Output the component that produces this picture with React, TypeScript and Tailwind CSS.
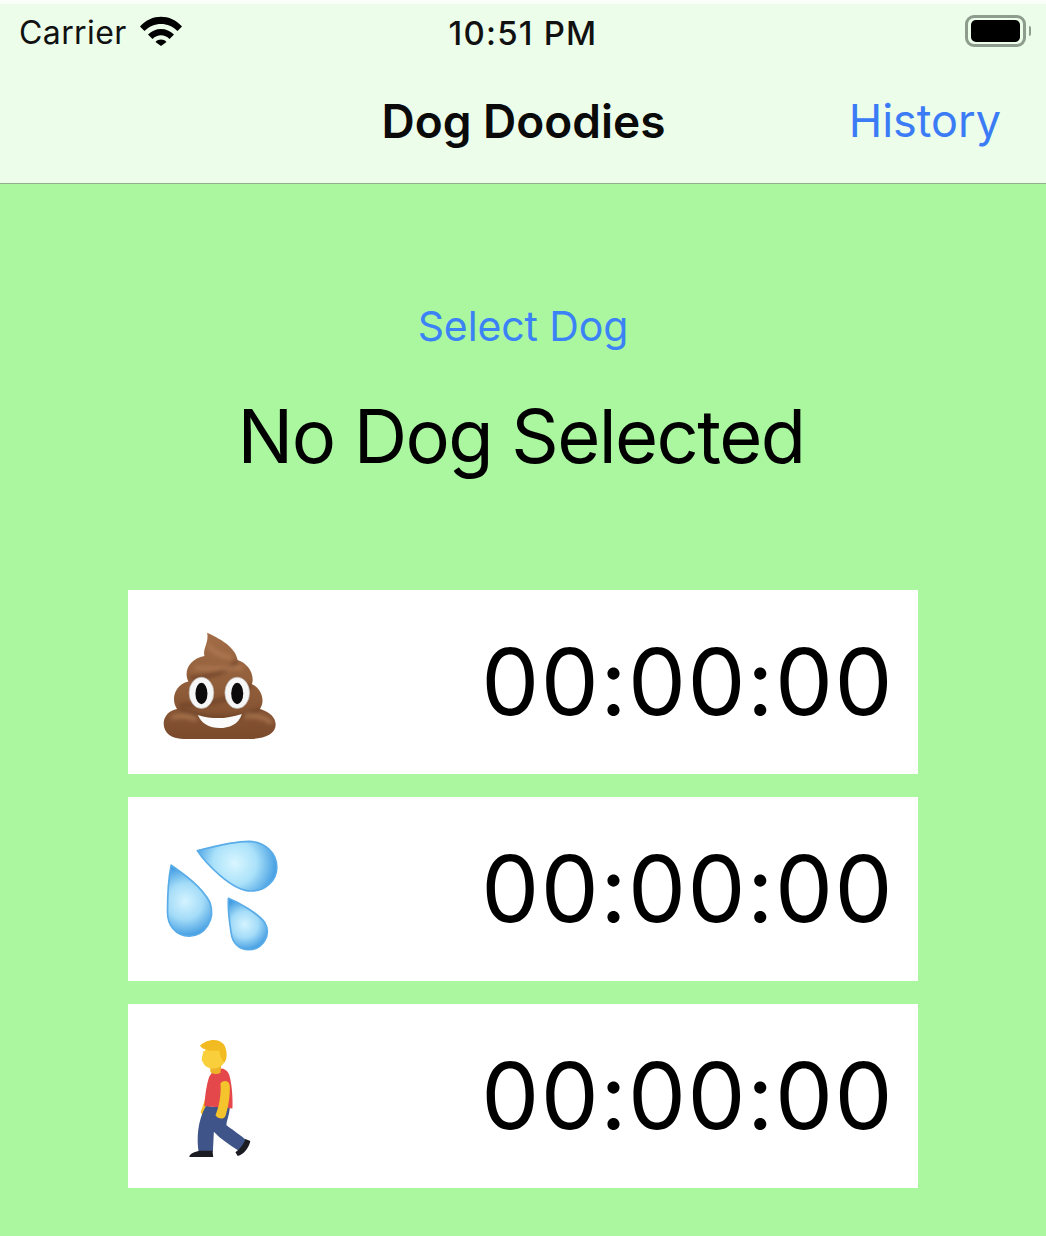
const outline = "M232 70C265 85 318 112 323 152C352 160 376 195 366 224C392 235 408 272 390 298C420 306 437 325 437 345C437 375 400 388 360 388L160 388C125 388 102 370 102 342C102 318 120 302 142 298C122 270 135 225 176 216C160 185 180 148 224 140C218 118 238 100 232 70Z";

const Poop = () => (
  <svg width="113" height="107" viewBox="100 68 338 320" className="block">
    <defs>
      <linearGradient id="pg" x1="0" y1="0" x2="0" y2="1">
        <stop offset="0" stopColor="#a26d47" />
        <stop offset="0.55" stopColor="#8f5c39" />
        <stop offset="1" stopColor="#7a4a2c" />
      </linearGradient>
      <filter id="soft" x="-10%" y="-10%" width="120%" height="120%">
        <feGaussianBlur stdDeviation="6" />
      </filter>
      <clipPath id="pc">
        <path d={outline} />
      </clipPath>
    </defs>
    <path fill="url(#pg)" d={outline} />
    <g clipPath="url(#pc)" fill="none" filter="url(#soft)">
      <path d="M180 205C230 205 290 190 322 155" stroke="#6a3f25" strokeWidth="10" />
      <path d="M150 285C220 290 320 270 365 225" stroke="#6a3f25" strokeWidth="10" />
      <path d="M150 300C230 330 330 330 392 298" stroke="#6a3f25" strokeWidth="9" />
      <path d="M235 105C245 125 275 140 305 145" stroke="#b27c54" strokeWidth="10" />
      <path d="M195 175C230 180 290 175 340 175" stroke="#b27c54" strokeWidth="9" />
      <path d="M125 325C150 315 180 320 200 330" stroke="#b27c54" strokeWidth="10" />
      <path d="M345 320C375 315 410 325 425 340" stroke="#b27c54" strokeWidth="10" />
    </g>
    <ellipse cx="215" cy="250" rx="37" ry="47" fill="#f6f6f6" stroke="#b9b2ad" strokeWidth="2" />
    <ellipse cx="322" cy="250" rx="37" ry="47" fill="#f6f6f6" stroke="#b9b2ad" strokeWidth="2" />
    <ellipse cx="215" cy="252" rx="18" ry="32" fill="#0c0a0a" />
    <ellipse cx="322" cy="252" rx="18" ry="32" fill="#0c0a0a" />
    <path fill="#fafafa" d="M204 316C250 330 290 328 336 313C326 345 297 355 270 355C240 355 215 342 204 316Z" />
  </svg>
);

const Drops = () => (
  <svg width="113" height="111" viewBox="105 60 340 335" className="ml-[2px] mt-[6px] block">
    <defs>
      <radialGradient id="d1" gradientUnits="userSpaceOnUse" cx="315" cy="130" r="130">
        <stop offset="0" stopColor="#d9f6ff" />
        <stop offset="0.5" stopColor="#abe2fa" />
        <stop offset="1" stopColor="#3f9ae0" />
      </radialGradient>
      <radialGradient id="d2" gradientUnits="userSpaceOnUse" cx="165" cy="245" r="108">
        <stop offset="0" stopColor="#d4f3ff" />
        <stop offset="0.5" stopColor="#a4dcf8" />
        <stop offset="1" stopColor="#409be1" />
      </radialGradient>
      <radialGradient id="d3" gradientUnits="userSpaceOnUse" cx="345" cy="315" r="80">
        <stop offset="0" stopColor="#d4f3ff" />
        <stop offset="0.5" stopColor="#a4dcf8" />
        <stop offset="1" stopColor="#409be1" />
      </radialGradient>
    </defs>
    <g strokeLinejoin="round" stroke="#59ace8" strokeWidth="5">
      <path fill="url(#d1)" d="M202 92C250 80 310 64 358 64C408 66 442 100 442 142C442 185 405 214 365 214C335 214 300 192 272 168C245 145 220 120 202 92Z" />
      <path fill="url(#d2)" d="M123 136C160 162 215 200 240 248C258 300 225 350 178 350C135 350 112 315 112 278C112 230 114 180 123 136Z" />
      <path fill="url(#d3)" d="M296 236C330 250 385 282 405 308C428 348 398 391 358 391C325 391 307 368 304 340C299 305 293 270 296 236Z" />
    </g>
  </svg>
);

const Walker = () => (
  <svg width="62" height="120" viewBox="85 38 187 362" className="block">
    <path fill="#f5c32c" d="M148 160C142 190 134 222 120 258C122 268 134 272 140 262C152 236 162 205 168 175Z" />
    <path fill="#3f5488" d="M136 240L208 246C206 270 198 285 198 298C225 318 246 332 260 345L236 376C205 356 180 340 160 318L157 378H114C108 340 110 285 136 240Z" />
    <path fill="#1b1b22" d="M116 375L156 375L158 394L86 394C86 383 103 378 116 375Z" />
    <path fill="#1b1b22" d="M255 340L270 346C266 366 250 388 232 391L225 380C240 370 250 355 255 340Z" />
    <path fill="#e4484a" d="M146 152C162 122 194 118 206 145C215 175 217 215 216 248L131 240C134 205 138 175 146 152Z" />
    <path fill="#f5c32c" d="M180 172C190 160 207 164 208 180C209 205 205 240 195 270C189 282 173 280 165 268L173 245C179 220 182 195 180 170Z" />
    <path fill="#eeb329" d="M148 118L182 118L180 140C170 146 158 144 150 138Z" />
    <path fill="#f9d03c" d="M128 76C126 90 120 102 127 108C132 122 148 130 166 126C188 122 198 105 196 85L165 55Z" />
    <path fill="#f3bb22" d="M118 58C135 40 172 32 190 54C202 74 200 98 192 110C184 102 178 90 176 72C158 76 130 74 118 58Z" />
  </svg>
);

const Row = ({ children }: { children: React.ReactNode }) => (
  <div className="flex h-[184px] w-[790px] items-center justify-between bg-white pl-[35px] pr-[24px]">
    <div className="flex w-[115px] justify-start pt-[6px]">{children}</div>
    <span className="text-[92px] font-normal leading-none tracking-[1.45px] text-black">00:00:00</span>
  </div>
);

export default function App() {
  return (
    <div className="flex h-[1236px] w-[1046px] flex-col overflow-hidden bg-[#abf7a0] [font-family:Inter,sans-serif]">
      <header className="h-[184px] border-b border-[#8fae8c] border-t-4 border-t-[#fbfffa] bg-[#ecfdea]">
        <div className="flex h-[56px] items-center justify-between pl-[19px] pr-[15px]">
          <div className="flex w-[300px] items-center gap-[13px]">
            <span className="mt-[2px] text-[32px] leading-none tracking-[0.4px] text-[#111]">Carrier</span>
            <svg width="42" height="30" viewBox="0 0 42 30" className="-mt-[2px]">
              <path d="M0 10.500C11.500 -2.500 30.500 -2.500 42 10.500L37.500 15C28.500 5.500 13.500 5.500 4.500 15Z" fill="#000" />
              <path d="M8 18.500C15 11 27 11 34 18.500L29.500 23C24.500 18 17.500 18 12.500 23Z" fill="#000" />
              <path d="M15.500 26C18.500 22.800 23.500 22.800 26.500 26L21 30Z" fill="#000" />
            </svg>
          </div>
          <span className="mr-[4px] mt-[2px] text-[33px] font-medium leading-none tracking-[1.2px] text-[#111]">10:51 PM</span>
          <div className="-mt-[2px] flex w-[300px] items-center justify-end gap-[3px]">
            <div className="flex h-[32px] w-[61px] items-center justify-center rounded-[9px] border-[3px] border-[#8d9c8c]">
              <div className="h-[22px] w-[49px] rounded-[5px] bg-black" />
            </div>
            <div className="h-[10px] w-[2px] rounded-r-sm bg-[#8d9c8c]" />
          </div>
        </div>
        <div className="flex h-[119px] items-center justify-between pl-[46px] pr-[45px] pt-[2px]">
          <div className="w-[154px]" />
          <h1 className="text-[46px] font-semibold leading-none tracking-[0px] text-[#0a0a0a]">Dog Doodies</h1>
          <span className="w-[154px] text-right text-[45px] leading-none text-[#3b7cf6]">History</span>
        </div>
      </header>

      <main className="flex flex-1 flex-col items-center">
        <span className="mt-[117px] text-[41px] leading-[50px] tracking-[-0.1px] text-[#3b82f6]">Select Dog</span>
        <h2 className="mt-[40px] pr-[4px] text-[74px] leading-[90px] tracking-[-1.6px] text-black">No Dog Selected</h2>
        <div className="mt-[109px] flex flex-col gap-[23px]">
          <Row><Poop /></Row>
          <Row><Drops /></Row>
          <Row><div className="pl-[26px]"><Walker /></div></Row>
        </div>
      </main>
    </div>
  );
}
